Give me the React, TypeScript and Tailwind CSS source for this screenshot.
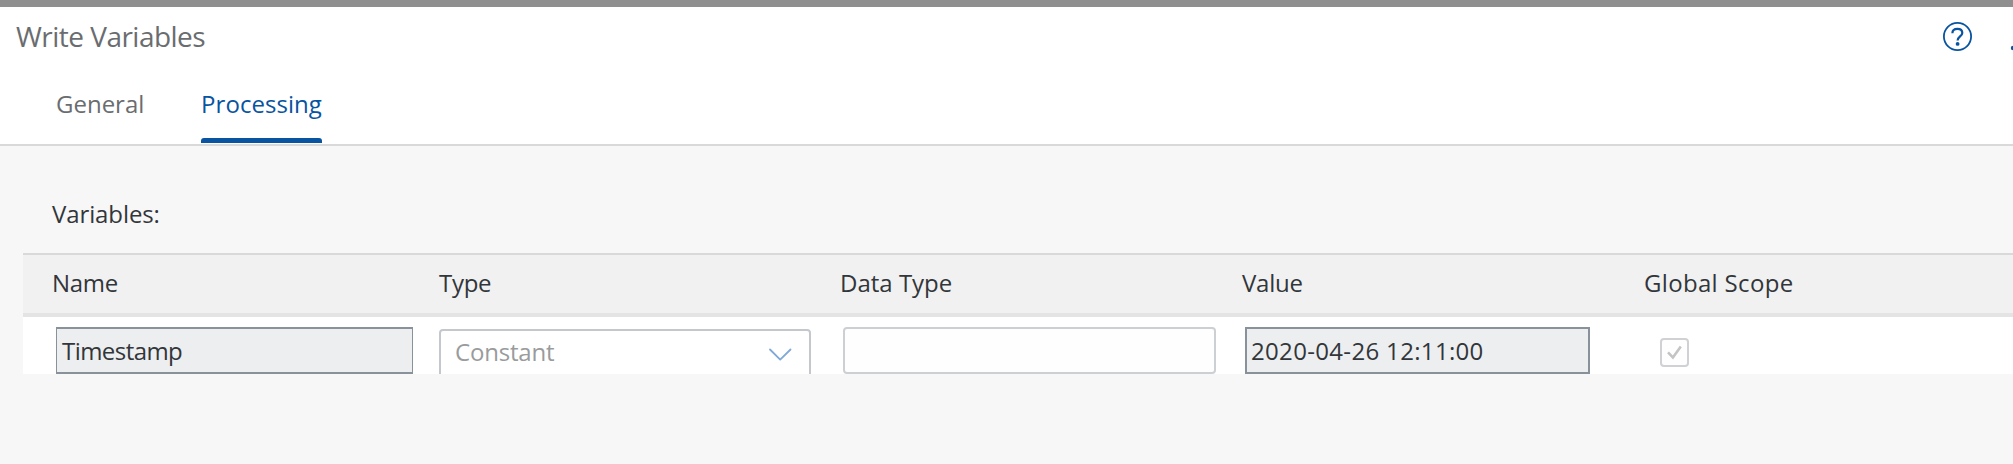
import type { ReactNode } from "react";

const COLUMNS = "grid grid-cols-[387px_400px_403px_401px_1fr] pl-[29px]";

function Tab({ children, active = false }: { children: ReactNode; active?: boolean }) {
  return (
    <button
      type="button"
      role="tab"
      aria-selected={active}
      className={
        active
          ? "flex h-full w-[121px] flex-col justify-between text-[#0854a0]"
          : "flex h-full w-[88px] flex-col text-[#6a6d70]"
      }
    >
      <span className={active ? "block leading-8 tracking-[0.06px]" : "block leading-8"}>{children}</span>
      {active && <span className="block h-[5px] w-full rounded-t-[3px] bg-[#0854a0]" />}
    </button>
  );
}

function HelpIcon() {
  return (
    <svg width="30" height="30" viewBox="0 0 30 30" fill="none" stroke="#0854a0">
      <circle cx="15.5" cy="14.5" r="13.6" strokeWidth="1.8" />
      <path d="M10.4 11.2C10.4 8.4 12.4 6.8 15.4 6.8s4.9 1.7 4.9 4.2c0 3.2-4.7 3.7-4.7 7.4" strokeWidth="2.2" />
      <circle cx="15.6" cy="21.9" r="1.9" fill="#0854a0" stroke="none" />
    </svg>
  );
}

export default function App() {
  return (
    <div className="flex h-[464px] w-full flex-col overflow-hidden bg-[#f7f7f7] font-['Open_Sans',sans-serif] text-[24px] text-[#32363a]">
      <div className="h-[7px] shrink-0 bg-[#8f8f8f]" />
      <header className="flex h-[139px] shrink-0 flex-col border-b-2 border-[#d9d9d9] bg-white">
        <div className="flex h-[81px] justify-between pt-[9px] pl-[16px]">
          <h1 className="text-[28px] leading-10 tracking-[-0.52px] text-[#6a6d70]">Write Variables</h1>
          <div className="flex gap-[38px] pt-[6px]">
            <HelpIcon />
            <svg width="3" height="30" viewBox="0 0 3 30">
              <circle cx="3" cy="26" r="2.2" fill="#0854a0" />
            </svg>
          </div>
        </div>
        <nav role="tablist" className="flex h-[55px] gap-[57px] pl-[56px]">
          <Tab>General</Tab>
          <Tab active>Processing</Tab>
        </nav>
      </header>
      <main className="pt-[52px] pl-[23px]">
        <h2 className="pl-[29px] leading-8 tracking-[-0.1px]">Variables:</h2>
        <div className="mt-[23px]">
          <div className={`${COLUMNS} h-[64px] border-t-2 border-b-4 border-t-[#d9d9d9] border-b-[#e4e4e4] bg-[#f1f1f1] leading-[56px]`}>
            <span className="tracking-[-0.3px]">Name</span>
            <span className="tracking-[-0.3px]">Type</span>
            <span className="pl-px">Data Type</span>
            <span className="tracking-[-0.2px]">Value</span>
            <span className="pl-px tracking-[0.33px]">Global Scope</span>
          </div>
          <div className={`${COLUMNS} h-[57px] overflow-hidden bg-white pt-[10px]`}>
            <div className="ml-1 h-[47px] w-[357px] border-x border-y-2 border-[#89919a] bg-[#edeef0] pl-[5px] leading-[43px] tracking-[-0.55px]">
              Timestamp
            </div>
            <div className="mt-[2px] flex h-[49px] w-[372px] justify-between rounded-[4px] border-2 border-[#c4c8cc] pr-[17px] pl-[14px] leading-[41px] text-[#999b9d]">
              <span className="tracking-[-0.2px]">Constant</span>
              <svg className="mt-[17px]" width="24" height="14" viewBox="0 0 24 14" fill="none">
                <path d="M2 1.5 12.2 11.6 22.5 1.5" stroke="#7fa9d6" strokeWidth="1.8" strokeLinecap="round" strokeLinejoin="round" />
              </svg>
            </div>
            <div className="ml-1 h-[47px] w-[373px] rounded-[4px] border-2 border-[#cdd0d3] bg-[#fefefe]" />
            <div className="ml-[3px] h-[47px] w-[345px] border-2 border-[#89919a] bg-[#edeef0] pl-[4px] leading-[43px] tracking-[0.33px]">
              2020-04-26 12:11:00
            </div>
            <div className="mt-[11px] ml-[17px] flex size-[29px] items-center justify-center rounded-[4px] border-2 border-[#cfd1d4] bg-[#fefefe]">
              <svg width="17" height="17" viewBox="0 0 17 17" fill="none">
                <path d="M2 8.4 6.9 13.4 14.8 2.4" stroke="#c4c4c4" strokeWidth="2.6" />
              </svg>
            </div>
          </div>
        </div>
      </main>
    </div>
  );
}
